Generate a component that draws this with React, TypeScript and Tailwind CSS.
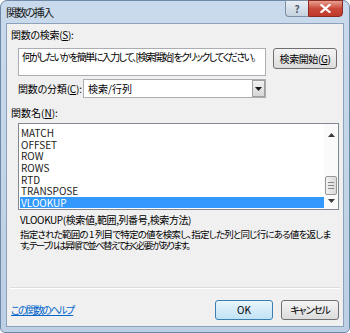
import React from "react";

const items = ["MATCH", "OFFSET", "ROW", "ROWS", "RTD", "TRANSPOSE", "VLOOKUP"];

export default function App() {
  return (
    <div className="w-[350px] h-[333px] bg-white">
      <div className="w-[350px] h-[333px] rounded-t-[7px] rounded-b-[5px] border border-[#6f8aa8] bg-gradient-to-b from-[#c9daec] to-[#bccfe4] flex flex-col font-['Noto_Sans_CJK_JP','Noto_Sans',sans-serif] text-[10px] text-black [font-feature-settings:'palt']">
        <div className="h-[22px] flex items-start justify-between shrink-0">
          <div className="pl-[5px] pt-[5px] text-[11px] leading-[13px] text-[#1a1a1a] tracking-[-1.6px] whitespace-nowrap">関数の挿入</div>
          <div className="flex mr-[6px] -mt-px">
            <div className="w-[23px] h-[17px] rounded-bl-[4px] border border-[#7f8fa3] border-r-0 bg-gradient-to-b from-[#e8eef5] to-[#c5d2df] flex items-center justify-center text-[10px] font-bold text-[#4f5c6b] leading-none">?</div>
            <div className="w-[35px] h-[17px] rounded-br-[4px] border border-[#8a2a22] bg-gradient-to-b from-[#e8a093] via-[#c9493a] to-[#c0392b] flex items-center justify-center">
              <svg width="11" height="9" viewBox="0 0 11 9">
                <path d="M1.5 1 L9.5 8 M9.5 1 L1.5 8" stroke="#ffffff" strokeWidth="2.2" strokeLinecap="square" />
              </svg>
            </div>
          </div>
        </div>
        <div className="mx-[5px] mb-[5px] flex-1 border border-[#8da2ba] bg-[#f0f0f0] flex flex-col">
          <div className="mt-[5px] pl-[4px] leading-[12px] tracking-[-0.3px] whitespace-nowrap">
            関数の検索(<span className="underline">S</span>):
          </div>
          <div className="mt-[7px] ml-[11px] flex items-start gap-[7px]">
            <div className="w-[248px] h-[28px] border border-[#abadb3] bg-white px-[3px] pt-[2px] leading-[12px] tracking-[-1.6px] whitespace-nowrap overflow-hidden">
              何がしたいかを簡単に入力して、[検索開始] をクリックしてください。
            </div>
            <div className="w-[64px] h-[21px] rounded-[3px] border border-[#707070] bg-gradient-to-b from-[#f4f4f4] to-[#dcdcdc] flex items-center justify-center leading-none tracking-[-0.4px] whitespace-nowrap">
              検索開始(<span className="underline">G</span>)
            </div>
          </div>
          <div className="mt-[3px] ml-[11px] flex items-center">
            <div className="w-[65px] leading-[12px] tracking-[-0.2px] whitespace-nowrap">
              関数の分類(<span className="underline">C</span>):
            </div>
            <div className="w-[183px] h-[19px] border border-[#abadb3] bg-white flex items-center">
              <div className="flex-1 pl-[4px] leading-[12px] whitespace-nowrap">検索/行列</div>
              <div className="w-[13px] h-[17px] border border-[#a0a0a0] bg-gradient-to-b from-[#f2f2f2] to-[#d6d6d6] flex items-center justify-center">
                <svg width="7" height="4" viewBox="0 0 7 4">
                  <path d="M0 0 L7 0 L3.5 4 Z" fill="#1a1a1a" />
                </svg>
              </div>
            </div>
          </div>
          <div className="mt-[9px] pl-[4px] leading-[12px] whitespace-nowrap">
            関数名(<span className="underline">N</span>):
          </div>
          <div className="mt-[4px] ml-[11px] w-[321px] h-[87px] border border-[#828790] bg-white flex">
            <div className="flex-1 pt-[3px] pl-px flex flex-col">
              {items.map((it) => (
                <div
                  key={it}
                  className={
                    it === "VLOOKUP"
                      ? "h-[11.65px] leading-[11.65px] pl-px bg-[#3399ff] text-[#ffffff]"
                      : "h-[11.65px] leading-[11.65px] pl-px text-[#1b1b1b]"
                  }
                >
                  {it}
                </div>
              ))}
            </div>
            <div className="w-[14px] flex flex-col items-center bg-[#fafafa]">
              <div className="h-[14px] flex items-end justify-center pb-[1px]">
                <svg width="7" height="4" viewBox="0 0 7 4">
                  <path d="M3.5 0 L7 4 L0 4 Z" fill="#3b3b3b" />
                </svg>
              </div>
              <div className="flex-1 w-full flex flex-col justify-end items-center">
                <div className="w-[12px] h-[19px] rounded-[2px] border border-[#979797] bg-gradient-to-r from-[#f2f2f2] to-[#dadada] flex flex-col items-center justify-center gap-[2px]">
                  <div className="w-[6px] h-px bg-[#8a8a8a]" />
                  <div className="w-[6px] h-px bg-[#8a8a8a]" />
                  <div className="w-[6px] h-px bg-[#8a8a8a]" />
                </div>
              </div>
              <div className="h-[14px] flex items-start justify-center pt-[4px]">
                <svg width="7" height="4" viewBox="0 0 7 4">
                  <path d="M0 0 L7 0 L3.5 4 Z" fill="#3b3b3b" />
                </svg>
              </div>
            </div>
          </div>
          <div className="mt-[4px] ml-[13px] leading-[12px] tracking-[-0.4px] whitespace-nowrap">
            VLOOKUP(検索値,範囲,列番号,検索方法)
          </div>
          <div className="mt-[3px] ml-[13px] leading-[11px] text-[9.5px] whitespace-nowrap flex flex-col">
            <span className="tracking-[-0.8px]">指定された範囲の 1 列目で特定の値を検索し、指定した列と同じ行にある値を返しま</span>
            <span className="tracking-[-1.7px]">す。テーブルは昇順で並べ替えておく必要があります。</span>
          </div>
          <div className="flex-1" />
          <div className="ml-[3px] mr-[3px] h-px bg-[#dcdcdc] border-b border-white box-content" />
          <div className="mt-[11px] mb-[6px] pl-[4px] pr-[4px] flex items-center">
            <div className="flex-1 text-[#0066cc] underline leading-[12px] tracking-[-1.8px] whitespace-nowrap">この関数のヘルプ</div>
            <div className="w-[58px] h-[20px] rounded-[3px] border border-[#3c7fb1] bg-gradient-to-b from-[#e9f5fc] to-[#c1e3f6] flex items-center justify-center leading-none">
              OK
            </div>
            <div className="ml-[8px] w-[58px] h-[20px] rounded-[3px] border border-[#707070] bg-gradient-to-b from-[#f4f4f4] to-[#dcdcdc] flex items-center justify-center leading-none tracking-[-1.2px] whitespace-nowrap">
              キャンセル
            </div>
          </div>
        </div>
      </div>
    </div>
  );
}
